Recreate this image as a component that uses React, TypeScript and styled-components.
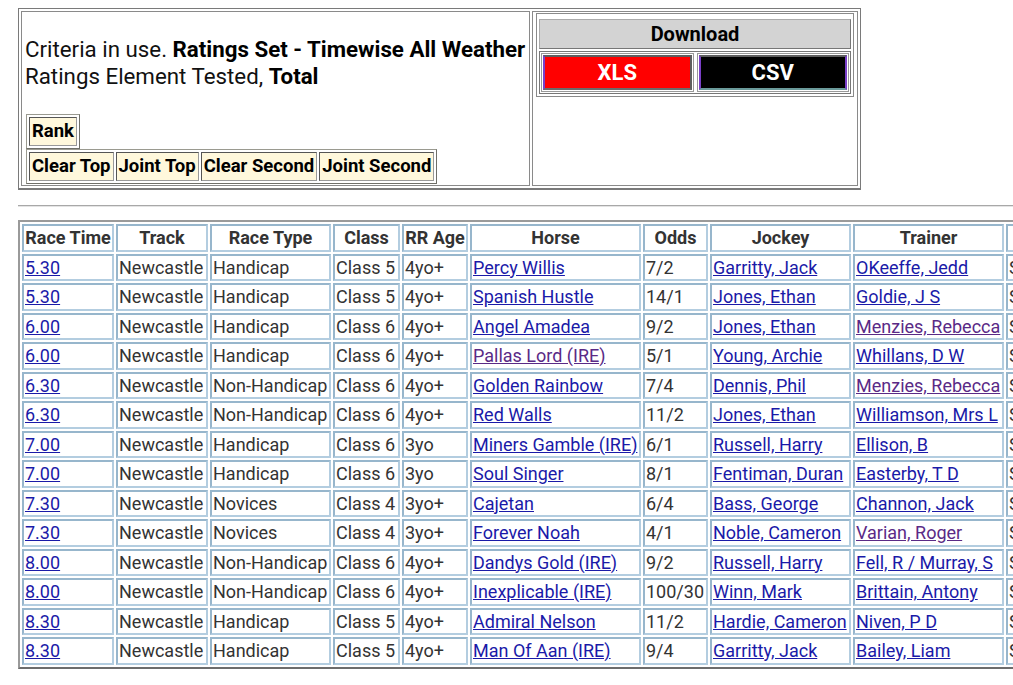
import styled, { createGlobalStyle } from "styled-components";

type Link = { text: string; visited?: boolean };
type Race = {
  time: string;
  cls: string;
  type: string;
  age: string;
  horse: Link;
  odds: string;
  jockey: string;
  trainer: Link;
};

const races: Race[] = [
  { time: "5.30", type: "Handicap", cls: "Class 5", age: "4yo+", horse: { text: "Percy Willis" }, odds: "7/2", jockey: "Garritty, Jack", trainer: { text: "OKeeffe, Jedd" } },
  { time: "5.30", type: "Handicap", cls: "Class 5", age: "4yo+", horse: { text: "Spanish Hustle" }, odds: "14/1", jockey: "Jones, Ethan", trainer: { text: "Goldie, J S" } },
  { time: "6.00", type: "Handicap", cls: "Class 6", age: "4yo+", horse: { text: "Angel Amadea" }, odds: "9/2", jockey: "Jones, Ethan", trainer: { text: "Menzies, Rebecca", visited: true } },
  { time: "6.00", type: "Handicap", cls: "Class 6", age: "4yo+", horse: { text: "Pallas Lord (IRE)", visited: true }, odds: "5/1", jockey: "Young, Archie", trainer: { text: "Whillans, D W" } },
  { time: "6.30", type: "Non-Handicap", cls: "Class 6", age: "4yo+", horse: { text: "Golden Rainbow" }, odds: "7/4", jockey: "Dennis, Phil", trainer: { text: "Menzies, Rebecca", visited: true } },
  { time: "6.30", type: "Non-Handicap", cls: "Class 6", age: "4yo+", horse: { text: "Red Walls" }, odds: "11/2", jockey: "Jones, Ethan", trainer: { text: "Williamson, Mrs L" } },
  { time: "7.00", type: "Handicap", cls: "Class 6", age: "3yo", horse: { text: "Miners Gamble (IRE)" }, odds: "6/1", jockey: "Russell, Harry", trainer: { text: "Ellison, B" } },
  { time: "7.00", type: "Handicap", cls: "Class 6", age: "3yo", horse: { text: "Soul Singer" }, odds: "8/1", jockey: "Fentiman, Duran", trainer: { text: "Easterby, T D" } },
  { time: "7.30", type: "Novices", cls: "Class 4", age: "3yo+", horse: { text: "Cajetan" }, odds: "6/4", jockey: "Bass, George", trainer: { text: "Channon, Jack" } },
  { time: "7.30", type: "Novices", cls: "Class 4", age: "3yo+", horse: { text: "Forever Noah" }, odds: "4/1", jockey: "Noble, Cameron", trainer: { text: "Varian, Roger", visited: true } },
  { time: "8.00", type: "Non-Handicap", cls: "Class 6", age: "4yo+", horse: { text: "Dandys Gold (IRE)" }, odds: "9/2", jockey: "Russell, Harry", trainer: { text: "Fell, R / Murray, S" } },
  { time: "8.00", type: "Non-Handicap", cls: "Class 6", age: "4yo+", horse: { text: "Inexplicable (IRE)" }, odds: "100/30", jockey: "Winn, Mark", trainer: { text: "Brittain, Antony" } },
  { time: "8.30", type: "Handicap", cls: "Class 5", age: "4yo+", horse: { text: "Admiral Nelson" }, odds: "11/2", jockey: "Hardie, Cameron", trainer: { text: "Niven, P D" } },
  { time: "8.30", type: "Handicap", cls: "Class 5", age: "4yo+", horse: { text: "Man Of Aan (IRE)" }, odds: "9/4", jockey: "Garritty, Jack", trainer: { text: "Bailey, Liam" } },
];

const columns = [
  { label: "Race Time", width: 92 },
  { label: "Track", width: 92 },
  { label: "Race Type", width: 121 },
  { label: "Class", width: 67 },
  { label: "RR Age", width: 66 },
  { label: "Horse", width: 171 },
  { label: "Odds", width: 65 },
  { label: "Jockey", width: 141 },
  { label: "Trainer", width: 151 },
  { label: "Going", width: 100 },
];

export default function App() {
  return (
    <>
      <GlobalStyle />
      <Page>
        <Criteria>
          <InfoCell>
            <InfoText>
              Criteria in use. <b>Ratings Set - Timewise All Weather</b>
              <br />
              Ratings Element Tested, <b>Total</b>
            </InfoText>
            <ButtonGroup>
              <RankButton>Rank</RankButton>
            </ButtonGroup>
            <ButtonGroup>
              <RankButton>Clear Top</RankButton>
              <RankButton>Joint Top</RankButton>
              <RankButton>Clear Second</RankButton>
              <RankButton>Joint Second</RankButton>
            </ButtonGroup>
          </InfoCell>
          <DownloadCell>
            <DownloadBox>
              <DownloadTitle>Download</DownloadTitle>
              <DownloadRow>
                <DownloadSlot>
                  <FileButton $bg="#ff0000" $edge="#6a6a6a">XLS</FileButton>
                </DownloadSlot>
                <DownloadSlot>
                  <FileButton $bg="#000000" $edge="#6a9a9a">CSV</FileButton>
                </DownloadSlot>
              </DownloadRow>
            </DownloadBox>
          </DownloadCell>
        </Criteria>

        <Rule />

        <Results>
          <thead>
            <tr>
              {columns.map((c) => (
                <Head key={c.label} style={{ width: c.width }}>
                  {c.label}
                </Head>
              ))}
            </tr>
          </thead>
          <tbody>
            {races.map((r, i) => (
              <tr key={i}>
                <Cell>
                  <RowLink href="#">{r.time}</RowLink>
                </Cell>
                <Cell>Newcastle</Cell>
                <Cell>{r.type}</Cell>
                <Cell>{r.cls}</Cell>
                <Cell>{r.age}</Cell>
                <Cell>
                  <RowLink href="#" $visited={r.horse.visited}>
                    {r.horse.text}
                  </RowLink>
                </Cell>
                <Cell>{r.odds}</Cell>
                <Cell>
                  <RowLink href="#">{r.jockey}</RowLink>
                </Cell>
                <Cell>
                  <RowLink href="#" $visited={r.trainer.visited}>
                    {r.trainer.text}
                  </RowLink>
                </Cell>
                <Cell>Standard</Cell>
              </tr>
            ))}
          </tbody>
        </Results>
      </Page>
    </>
  );
}

const GlobalStyle = createGlobalStyle`
  * { box-sizing: border-box; }
  html, body { overflow: hidden; }
  body {
    margin: 0;
    background: #ffffff;
    font-family: Roboto, "Liberation Sans", sans-serif;
    color: #000;
  }
`;

const Page = styled.div`
  width: 1200px;
  padding: 8px 0 0 18px;
`;

const Criteria = styled.div`
  display: flex;
  gap: 2px;
  width: 843px;
  height: 182px;
  padding: 2px;
  border: 1px solid #7a7a7a;
  border-bottom-width: 2px;
`;

const InfoCell = styled.div`
  width: 509px;
  border: 1px solid #8a8a8a;
  padding: 24px 3px 3px 3px;
  display: flex;
  flex-direction: column;
  align-items: flex-start;
`;

const InfoText = styled.div`
  font-size: 22.3px;
  line-height: 27px;
  color: #111;
  margin-bottom: 24px;
  white-space: nowrap;

  b {
    font-weight: 700;
    color: #000;
  }
`;

const ButtonGroup = styled.div`
  display: inline-flex;
  gap: 2px;
  padding: 2px;
  border: 1px solid #9a9a90;
  border-right-color: #6f6f68;
  border-bottom-color: #6f6f68;
  margin-left: 1px;
`;

const RankButton = styled.div`
  background: #fff8dc;
  border: 1px solid #555;
  border-right-color: #999;
  border-bottom-color: #999;
  padding: 3px 2px;
  font-size: 18.5px;
  font-weight: 700;
  line-height: 21px;
  white-space: nowrap;
`;

const DownloadCell = styled.div`
  flex: 1;
  border: 1px solid #8a8a8a;
  padding: 1px 3px;
`;

const DownloadBox = styled.div`
  border: 1px solid #8a8a8a;
  padding: 5px 2px 2px 2px;
  display: flex;
  flex-direction: column;
  gap: 2px;
`;

const DownloadTitle = styled.div`
  background: #d3d3d3;
  border: 1px solid #777;
  border-top-color: #aaa;
  border-left-color: #aaa;
  height: 30px;
  line-height: 28px;
  text-align: center;
  font-size: 20px;
  font-weight: 700;
`;

const DownloadRow = styled.div`
  display: grid;
  grid-template-columns: 1fr 1fr;
  gap: 3px;
  padding: 1px;
  border: 1px solid #777;
`;

const DownloadSlot = styled.div`
  border: 1px solid #999;
  padding: 1px;
`;

const FileButton = styled.div<{ $bg: string; $edge: string }>`
  height: 35px;
  line-height: 31px;
  background: ${(p) => p.$bg};
  color: #fff;
  text-align: center;
  font-size: 22px;
  font-weight: 700;
  border: 2px solid #5e5e5e;
  border-left-color: #7a3fc8;
  border-right-color: ${(p) => (p.$bg === "#000000" ? "#7a3fc8" : "#5e5e5e")};
  border-bottom-color: ${(p) => p.$edge};
`;

const Rule = styled.hr`
  margin: 15px 0 13px 0;
  border: 0;
  border-top: 1px solid #a8a8a8;
  border-bottom: 1px solid #e4e4e4;
`;

const Results = styled.table`
  table-layout: fixed;
  width: 1092px;
  border-collapse: separate;
  border-spacing: 2px;
  border: 2px solid #9a9a9a;
  border-right-color: #6c6c6c;
  border-bottom-color: #6c6c6c;
  font-size: 18px;
  color: #333;
`;

const Head = styled.th`
  border: 2px solid #b3cde0;
  border-top-color: #97b6cc;
  border-left-color: #97b6cc;
  padding: 1px 1px;
  line-height: 21.5px;
  font-weight: 700;
  text-align: center;
  white-space: nowrap;
  overflow: hidden;
`;

const Cell = styled.td`
  border: 2px solid #b3cde0;
  border-top-color: #97b6cc;
  border-left-color: #97b6cc;
  padding: 1px 0 1px 1px;
  line-height: 21.5px;
  white-space: nowrap;
  overflow: hidden;
`;

const RowLink = styled.a<{ $visited?: boolean }>`
  color: ${(p) => (p.$visited ? "#5a2a86" : "#1a1aa8")};
  text-decoration: underline;
`;
